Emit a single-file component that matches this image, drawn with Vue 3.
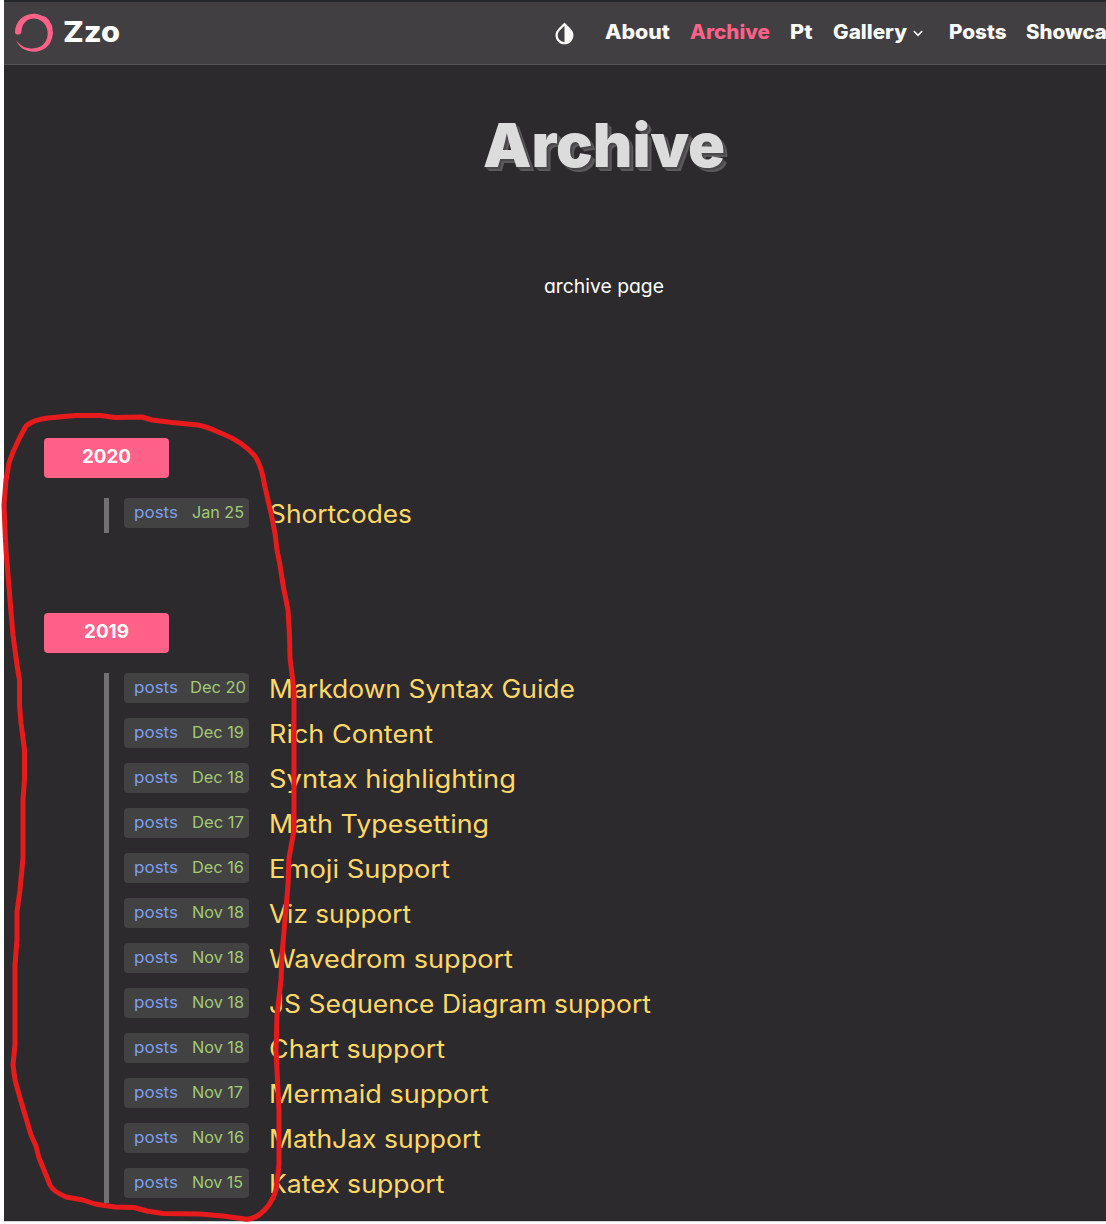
<script setup>
const nav = [
  { label: 'About', width: 65 },
  { label: 'Archive', width: 80, active: true },
  { label: 'Pt', width: 22.5 },
  { label: 'Gallery', width: 74, menu: true },
  { label: 'Posts', width: 57.5 },
  { label: 'Showcase', width: 105 },
]

const groups = [
  { year: '2020', width: 49, posts: [{ date: 'Jan 25', dateWidth: 52, title: 'Shortcodes', width: 143 }] },
  {
    year: '2019',
    width: 45,
    posts: [
      { date: 'Dec 20', dateWidth: 56, title: 'Markdown Syntax Guide', width: 306 },
      { date: 'Dec 19', dateWidth: 52, title: 'Rich Content', width: 164 },
      { date: 'Dec 18', dateWidth: 52, title: 'Syntax highlighting', width: 247 },
      { date: 'Dec 17', dateWidth: 52, title: 'Math Typesetting', width: 220 },
      { date: 'Dec 16', dateWidth: 52, title: 'Emoji Support', width: 181 },
      { date: 'Nov 18', dateWidth: 52, title: 'Viz support', width: 142 },
      { date: 'Nov 18', dateWidth: 52, title: 'Wavedrom support', width: 244 },
      { date: 'Nov 18', dateWidth: 52, title: 'JS Sequence Diagram support', width: 382 },
      { date: 'Nov 18', dateWidth: 52, title: 'Chart support', width: 176 },
      { date: 'Nov 17', dateWidth: 51, title: 'Mermaid support', width: 219.5 },
      { date: 'Nov 16', dateWidth: 52, title: 'MathJax support', width: 212 },
      { date: 'Nov 15', dateWidth: 51, title: 'Katex support', width: 175.5 },
    ],
  },
]

// Widens the letterforms so that the text spans the given width.
const vFit = {
  mounted(el, { value }) {
    const natural = el.getBoundingClientRect().width
    el.style.marginRight = `${value - natural}px`
    el.style.transform = `scaleX(${value / natural})`
  },
}
</script>

<template>
  <div class="page">
    <header class="bar">
      <a class="brand">
        <svg class="logo" viewBox="0 0 40 40">
          <path d="M1 19.5C1 8.500 9.500 1 19.500 .8C24 .5 26 2 28.500 3C32 3.500 35.500 6.500 36.500 10C38.600 12 38.400 15 38.500 17.500C39.500 20 38.500 22 38.200 24C37 31 32 36 26.500 37.500C22 39.500 18 38.800 14.500 38C8.500 36.500 4.500 33 2.300 27.500C5.500 31.500 9.500 34.500 14 34.900C18 35.700 21 35.500 24 34.600C30 32.500 33.500 27 33.700 21C34 13 28.500 6 20.500 5.500C13 5 7.500 11 7.400 19C7.400 22.300 1 22.500 1 19.500Z" />
        </svg>
        <span v-fit="57" class="name fit">Zzo</span>
      </a>
      <nav class="nav">
        <svg class="drop" viewBox="0 0 24 24">
          <path d="M17.660 7.930L12 2.270 6.340 7.930c-3.120 3.120-3.120 8.190 0 11.310C7.900 20.800 9.950 21.580 12 21.580c2.050 0 4.100-.78 5.660-2.340 3.120-3.120 3.120-8.190 0-11.310zM12 19.590c-1.600 0-3.110-.62-4.240-1.760C6.620 16.690 6 15.190 6 13.590s.62-3.110 1.760-4.240L12 5.100v14.490z" />
        </svg>
        <a v-for="item in nav" :key="item.label" class="link" :class="{ active: item.active }">
          <span v-fit="item.width" class="fit">{{ item.label }}</span>
          <svg v-if="item.menu" class="chevron" viewBox="0 0 10 7">
            <path d="M.8 1 5 5.300 9.200 1" />
          </svg>
        </a>
      </nav>
    </header>

    <main class="main">
      <h1 class="heading"><span v-fit="242" class="fit">Archive</span></h1>
      <p class="intro"><span v-fit="120" class="fit">archive page</span></p>

      <section v-for="group in groups" :key="group.year" class="group">
        <h2 class="year"><span v-fit="group.width" class="fit">{{ group.year }}</span></h2>
        <ul class="list">
          <li v-for="post in group.posts" :key="post.title" class="row">
            <span class="tag">
              <span class="kind"><span v-fit="44" class="fit">posts</span></span>
              <span class="date"><span v-fit="post.dateWidth" class="fit">{{ post.date }}</span></span>
            </span>
            <a class="title"><span v-fit="post.width" class="fit">{{ post.title }}</span></a>
          </li>
        </ul>
      </section>
    </main>

    <svg class="marker" viewBox="0 0 1106 1224">
      <path d="M26 426C32 421 39 419 48 418L75 415.500L101 415.500L115 417.500L142 417L152 420L172 422.500L198 425C209 427 215 431 223 434C236 439 247 447 255 456C260 464 263 474 264.500 485L271 513L275 533L277 550L280 565L283 585L288 610L289.500 635L290 658L294 690L294 830L289 858L288 885L285 920L282 955L281 980L277 1015L276 1050L279 1110L279 1165L276 1190C273 1200 267 1209 259 1215C254 1218 250 1220 245 1219L223 1216L200 1214L163 1213.500L147 1211L134 1207.500L115 1207L95 1204L83 1200L66 1197C59 1194 53 1191 50 1185L44 1170L39 1158L36 1146L31 1135L26 1118L20 1098L15 1080L13 1065L15 1045L15 965L17 940L17 912L20 890L23 858L23 800L24.500 780L24.500 750L21 723L19.500 705L19.500 680L17 665L13 635L10 600L8 575L6 550L5 530L4 505L6 480L9 463L13 452L20 437Z" />
    </svg>
  </div>
</template>

<style>
body {
  margin: 0;
  background: #fff;
}
</style>

<style scoped>
.page {
  position: relative;
  box-sizing: border-box;
  width: 1106px;
  height: 1224px;
  padding-left: 4px;
  overflow: hidden;
  font-family: Inter, "Noto Sans", sans-serif;
  white-space: nowrap;
}
.fit {
  display: inline-block;
  flex: none;
  transform-origin: 0 50%;
}
.bar {
  display: flex;
  box-sizing: border-box;
  height: 65px;
  border-top: 2px solid #25282b;
  border-bottom: 1px solid #555356;
  background: #423f42;
  overflow: hidden;
}
.brand {
  display: flex;
  width: 547px;
  flex: none;
}
.logo {
  width: 40px;
  height: 40px;
  margin: 11px 9px 0 10px;
  fill: #ff6188;
}
.name {
  align-self: flex-start;
  color: #fff;
  font-size: 29px;
  font-weight: 800;
  line-height: 60px;
}
.nav {
  display: flex;
  gap: 20px;
  flex: none;
}
.drop {
  width: 27px;
  height: 27px;
  margin: 18px 7px 0 0;
  fill: #fcfcfa;
}
.link {
  display: flex;
  color: #fcfcfa;
  font-size: 19.500px;
  font-weight: 800;
  line-height: 60px;
}
.link.active {
  color: #ff6188;
}
.chevron {
  width: 10px;
  height: 7px;
  margin: 28px 6px 0 6px;
  fill: none;
  stroke: #fcfcfa;
  stroke-width: 1.600;
}
.main {
  height: 1157px;
  background: #2d2a2e;
  border-bottom: 1px solid #d3cfd5;
  box-sizing: border-box;
  overflow: hidden;
}
.heading {
  width: 1199px;
  height: 80px;
  margin: 40px 0 0;
  text-align: center;
  color: #dcdcdc;
  font-size: 61px;
  font-weight: 900;
  line-height: 80px;
  text-shadow: 1px 1px #4a484b, 2px 2px #4a484b, 3px 3px #5b595c, 4px 4px #5b595c;
}
.intro {
  width: 1200px;
  height: 30px;
  margin: 87px 0 136px;
  text-align: center;
  color: #fff;
  font-size: 19px;
  font-feature-settings: "cv11";
  line-height: 30px;
}
.group {
  margin: 0 0 80px 40px;
}
.year {
  width: 125px;
  height: 40px;
  margin: 0 0 20px;
  border-radius: 4px;
  background: #ff6188;
  color: #fcfcfa;
  font-size: 19px;
  font-weight: 700;
  line-height: 37px;
  text-align: center;
}
.list {
  margin: 0 0 0 60px;
  padding: 0 0 0 15px;
  border-left: 5px solid #727072;
  list-style: none;
}
.row {
  display: flex;
  height: 35px;
  margin-bottom: 10px;
}
.row:last-child {
  margin-bottom: 0;
}
.tag {
  display: flex;
  box-sizing: border-box;
  width: 125px;
  height: 30px;
  padding-left: 10px;
  border-radius: 4px;
  background: #424242;
  font-size: 16px;
  line-height: 29px;
}
.kind {
  display: flex;
  width: 53px;
  color: #7b9ff0;
}
.date {
  display: flex;
  width: 61px;
  justify-content: center;
  color: #a3cb76;
}
.title {
  display: flex;
  margin-left: 20px;
  color: #ffd866;
  font-size: 25px;
  line-height: 33px;
}
.marker {
  position: absolute;
  inset: 0;
  width: 1106px;
  height: 1224px;
  fill: none;
  stroke: #e71b1c;
  stroke-width: 5;
  stroke-linejoin: round;
  pointer-events: none;
}
</style>
